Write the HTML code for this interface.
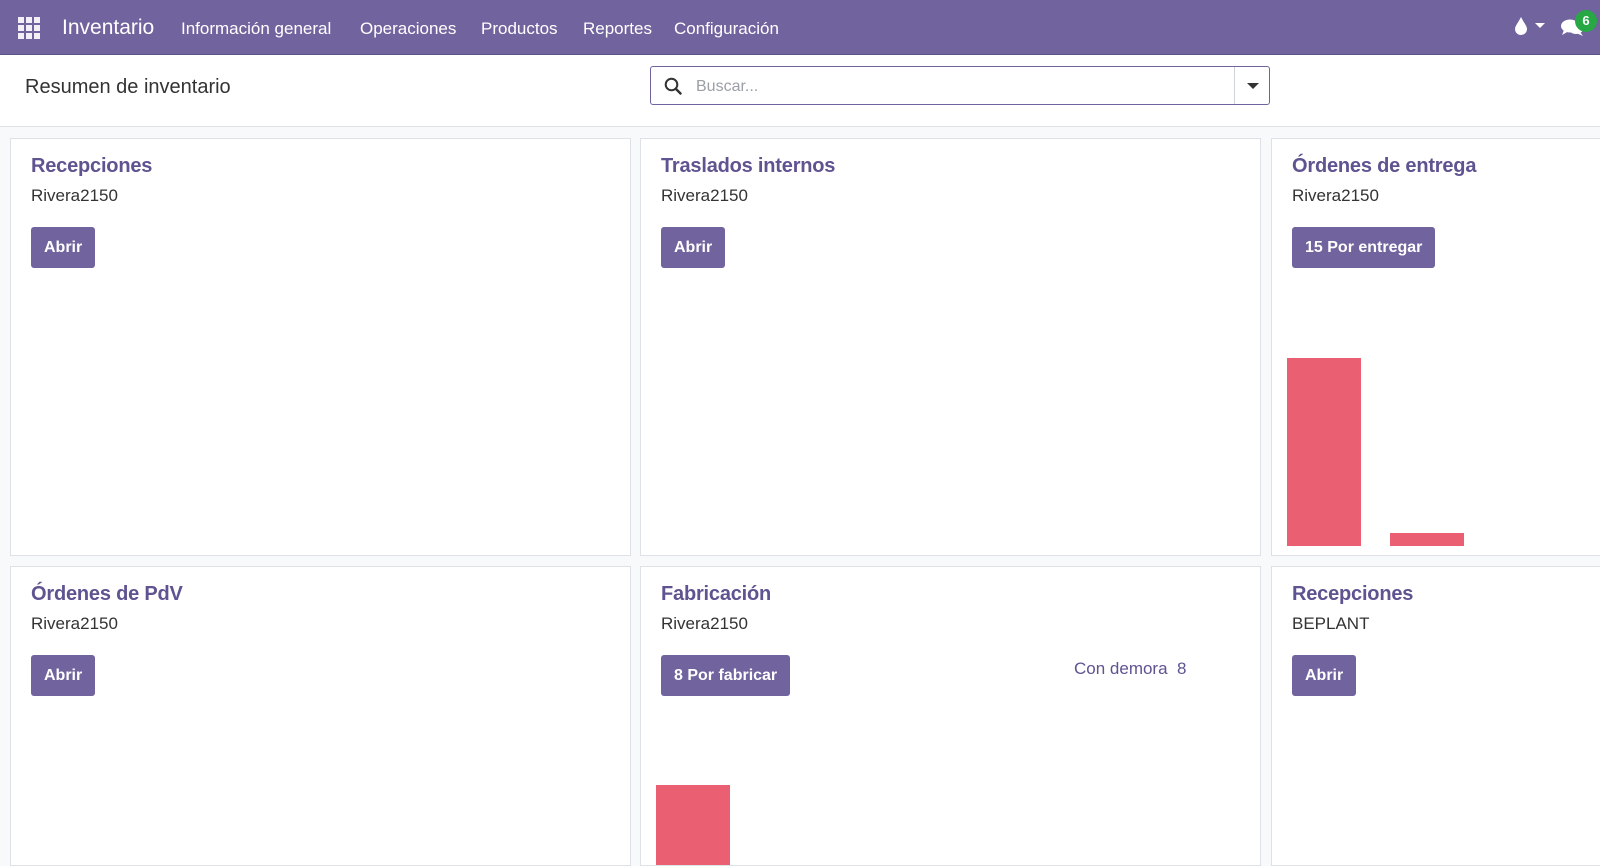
<!DOCTYPE html>
<html><head><meta charset="utf-8"><style>
*{box-sizing:border-box;margin:0;padding:0}
body{width:1600px;height:853px;overflow:hidden;background:#f8f9fa;font-family:"Liberation Sans",sans-serif;position:relative;color:#212529}
.nav{position:absolute;left:0;top:0;width:1600px;height:55px;background:#71639e;color:#fff;border-bottom:1px solid #5e5385}
.nav span{position:absolute;top:19px;font-size:17px}
.cp{position:absolute;top:55px;left:0;width:1600px;height:72px;background:#fff;border-bottom:1px solid #dee2e6}
.card{position:absolute;background:#fff;border:1px solid #dee2e6;overflow:hidden}
.t{position:absolute;left:20px;top:16px;font-size:20px;color:#5f5390;font-weight:bold;letter-spacing:-0.2px}
.s{position:absolute;left:20px;top:47px;font-size:17px;color:#333}
.b{position:absolute;left:20px;top:88px;height:41px;background:#71639e;color:#fff;font-weight:bold;font-size:16px;border-radius:3px;padding:0 13px;line-height:42px}
.bar{position:absolute;background:#eb5f73}
</style></head><body>
<div class="nav">
<svg style="position:absolute;left:18px;top:17px" width="22" height="22" viewBox="0 0 22 22" fill="#f3eff7"><rect x="0" y="0" width="6" height="6"/><rect x="8" y="0" width="6" height="6"/><rect x="16" y="0" width="6" height="6"/><rect x="0" y="8" width="6" height="6"/><rect x="8" y="8" width="6" height="6"/><rect x="16" y="8" width="6" height="6"/><rect x="0" y="16" width="6" height="6"/><rect x="8" y="16" width="6" height="6"/><rect x="16" y="16" width="6" height="6"/></svg>
<span style="left:62px;top:16px;font-size:21px">Inventario</span>
<span style="left:181px">Información general</span>
<span style="left:360px">Operaciones</span>
<span style="left:481px">Productos</span>
<span style="left:583px">Reportes</span>
<span style="left:674px">Configuración</span>
<svg style="position:absolute;left:1513px;top:16px" width="16" height="20" viewBox="0 0 16 20"><path d="M8 1 C5 7 2 10 2 13 A6 6 0 0 0 14 13 C14 10 11 7 8 1Z" fill="#fff"/></svg>
<svg style="position:absolute;left:1535px;top:23px" width="10" height="6"><path d="M0 0H10L5 5Z" fill="#fff"/></svg>
<svg style="position:absolute;left:1560px;top:16px" width="26" height="22" viewBox="0 0 26 22"><ellipse cx="10" cy="10" rx="9" ry="6.5" fill="#fff"/><path d="M4 14 L2 19 L9 15Z" fill="#fff"/><ellipse cx="16" cy="13" rx="7" ry="5" fill="#fff"/><path d="M20 16 L23 20 L16 17Z" fill="#fff"/></svg>
<div style="position:absolute;left:1575px;top:10px;width:22px;height:22px;border-radius:11px;background:#28a745;color:#fff;font-size:13px;font-weight:bold;text-align:center;line-height:22px">6</div>
</div>
<div class="cp">
<div style="position:absolute;left:25px;top:21px;font-size:20px;color:#333">Resumen de inventario</div>
<div style="position:absolute;left:650px;top:11px;width:620px;height:39px;border:1px solid #71639e;border-radius:3px;background:#fff">
<svg style="position:absolute;left:13px;top:10px" width="18" height="18" viewBox="0 0 18 18"><circle cx="7.5" cy="7.5" r="5.8" fill="none" stroke="#333" stroke-width="2"/><path d="M12 12L16.5 16.5" stroke="#333" stroke-width="2.4" stroke-linecap="round"/></svg>
<div style="position:absolute;left:45px;top:11px;font-size:16px;color:#9aa0a6">Buscar...</div>
<div style="position:absolute;left:583px;top:0;width:1px;height:37px;background:#ced4da"></div>
<svg style="position:absolute;left:596px;top:16px" width="12" height="7"><path d="M0 0H12L6 6Z" fill="#333"/></svg>
</div>
</div>
<div class="card" style="left:10px;top:138px;width:621px;height:418px"><div class="t">Recepciones</div><div class="s">Rivera2150</div><div class="b">Abrir</div></div>
<div class="card" style="left:640px;top:138px;width:621px;height:418px"><div class="t">Traslados internos</div><div class="s">Rivera2150</div><div class="b">Abrir</div></div>
<div class="card" style="left:1271px;top:138px;width:340px;height:418px"><div class="t">Órdenes de entrega</div><div class="s">Rivera2150</div><div class="b">15 Por entregar</div>
<div class="bar" style="left:15px;top:219px;width:74px;height:188px"></div><div class="bar" style="left:118px;top:394px;width:74px;height:13px"></div></div>
<div class="card" style="left:10px;top:566px;width:621px;height:300px"><div class="t">Órdenes de PdV</div><div class="s">Rivera2150</div><div class="b">Abrir</div></div>
<div class="card" style="left:640px;top:566px;width:621px;height:300px"><div class="t">Fabricación</div><div class="s">Rivera2150</div><div class="b">8 Por fabricar</div>
<div style="position:absolute;left:433px;top:92px;font-size:17px;color:#5f5390">Con demora&nbsp; 8</div>
<div class="bar" style="left:15px;top:218px;width:74px;height:90px"></div></div>
<div class="card" style="left:1271px;top:566px;width:340px;height:300px"><div class="t">Recepciones</div><div class="s">BEPLANT</div><div class="b">Abrir</div></div>
</body></html>
